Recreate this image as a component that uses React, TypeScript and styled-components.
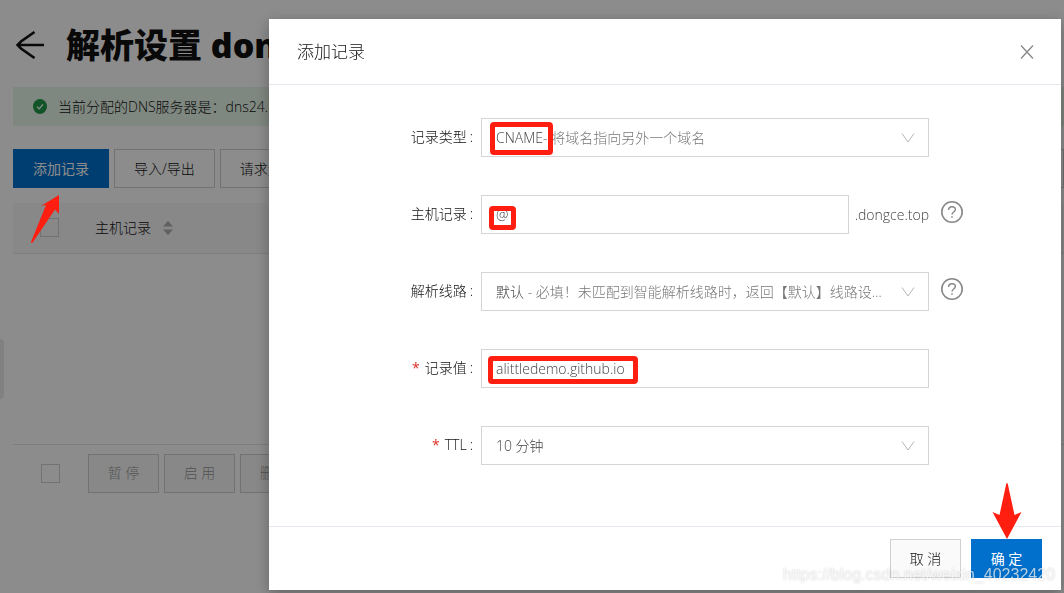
import React from 'react';
import styled, { createGlobalStyle, css } from 'styled-components';

const GlobalStyle = createGlobalStyle`
  *, *::before, *::after { box-sizing: border-box; }
  html, body { margin: 0; background: #fff; }
  body {
    font: 300 14px/20px "Open Sans", "Noto Sans CJK SC", sans-serif;
    color: #111;
    min-height: 100vh;
    overflow: hidden;
  }
  button, input, select { font: inherit; color: inherit; margin: 0; border-radius: 0; }
`;

const Page = styled.main`
  position: relative;
  min-height: 100vh;
  padding-left: 13px;
`;

const PageHeader = styled.header`
  display: flex;
  align-items: center;
  gap: 20px;
  height: 87px;
  padding: 2px 0 0 3px;
`;

const BackLink = styled.a`
  display: flex;
  color: #111;
`;

const PageTitle = styled.h1`
  margin: 0;
  font-size: 34px;
  line-height: 44px;
  font-weight: 800;
  color: #111;
  white-space: nowrap;
`;

const Notice = styled.div`
  display: flex;
  align-items: center;
  gap: 11px;
  height: 39px;
  padding-left: 20px;
  background: #e7f7e9;
  white-space: nowrap;
`;

const Toolbar = styled.div`
  display: flex;
  gap: 5px;
  padding: 23px 0 15px;
`;

const Anchor = styled.span`
  position: relative;
  display: inline-flex;
`;

const Button = styled.button<{ $kind?: 'primary' | 'muted' }>`
  min-width: 71px;
  height: 39px;
  padding: 0 18px;
  border: 1px solid #d0d0d0;
  background: #fafafa;
  white-space: nowrap;
  ${({ $kind }) =>
    $kind === 'primary' &&
    css`
      border-color: #0070cc;
      background: #0070cc;
      color: #fff;
      font-weight: 400;
    `}
  ${({ $kind }) =>
    $kind === 'muted' &&
    css`
      border-color: #d0d0d0;
      background: #f7f7f7;
      color: #999;
    `}
`;

const ToolButton = styled(Button)`
  min-width: 96px;
  padding: 0 19px;
  background-color: ${({ $kind }) => ($kind === 'primary' ? '#0070cc' : '#fff')};
`;

const Search = styled.input`
  flex: 1;
  min-width: 0;
  height: 39px;
  border: 1px solid #d0d0d0;
`;

const Table = styled.table`
  width: 100%;
  border-collapse: collapse;
  border-bottom: 1px solid #e6e6e6;

  th {
    height: 50px;
    padding: 0;
    text-align: left;
    font-weight: 300;
    background: #f8f8f8;
    border-bottom: 1px solid #e6e6e6;
  }
  th:first-child { width: 82px; padding-left: 27px; }
  td { height: 191px; }
`;

const Checkbox = styled.input`
  appearance: none;
  display: block;
  width: 19px;
  height: 19px;
  border: 1px solid #d0d0d0;
`;

const SortButton = styled.button`
  display: flex;
  align-items: center;
  gap: 12px;
  padding: 0;
  border: 0;
  background: none;
`;

const BatchBar = styled.div`
  display: flex;
  align-items: center;
  gap: 5px;
  padding: 9px 0 0 28px;

  input { margin-right: 23px; }
`;

const SideHandle = styled.div`
  position: absolute;
  left: 0;
  top: 339px;
  width: 4px;
  height: 60px;
  border-radius: 0 4px 4px 0;
  background: #ececec;
`;

const Overlay = styled.div`
  position: fixed;
  inset: 0;
  padding: 19px 3px 3px 269px;
  background: rgba(0, 0, 0, 0.45);
`;

const Dialog = styled.section`
  background: #fff;
  box-shadow: 0 4px 14px rgba(0, 0, 0, 0.3);
`;

const DialogHeader = styled.header`
  display: flex;
  align-items: center;
  justify-content: space-between;
  height: 66px;
  padding: 0 27px 0 28px;
  border-bottom: 1px solid #e3e9ee;
`;

const DialogTitle = styled.h2`
  margin: 0;
  font-size: 17px;
  line-height: 24px;
  font-weight: 300;
`;

const IconButton = styled.button`
  display: flex;
  padding: 0;
  border: 0;
  background: none;
  color: #888;
`;

const Form = styled.form`
  display: flex;
  flex-direction: column;
  gap: 38px;
  padding: 33px 0 61px;
`;

const Field = styled.div`
  display: grid;
  grid-template-columns: 204px minmax(0, 448px) auto;
  align-items: center;
  justify-content: start;
`;

const Label = styled.label<{ $required?: boolean }>`
  justify-self: end;
  padding-bottom: 2px;
  ${({ $required }) =>
    $required &&
    css`
      &::before {
        content: '*';
        margin-right: 5px;
        color: #d93026;
        font-weight: 400;
      }
    `}
  &::after {
    content: ':';
    margin-left: 3px;
  }
`;

const Control = styled.div`
  position: relative;
  display: flex;
  align-items: center;
  margin-left: 8px;
  margin-right: -8px;
  color: #444;
`;

const boxed = css`
  flex: 1;
  min-width: 0;
  height: 39px;
  padding: 0 14px;
  border: 1px solid #d5d5d5;
  background: #fff;
`;

const TextInput = styled.input`
  ${boxed}
`;

const Select = styled.select`
  ${boxed}
  appearance: none;
  color: transparent;

  option { color: #333; }
`;

const Selected = styled.span`
  position: absolute;
  left: 15px;
  right: 34px;
  overflow: hidden;
  text-overflow: ellipsis;
  white-space: nowrap;
  pointer-events: none;
  color: #777;

  b { font-weight: 300; color: #444; }
`;

const Chevron = styled.svg`
  position: absolute;
  right: 14px;
  pointer-events: none;
`;

const Suffix = styled.span`
  margin-left: 6px;
`;

const HelpButton = styled(IconButton)`
  margin-left: 20px;
  padding-bottom: 6px;
`;

const DialogFooter = styled.footer`
  display: flex;
  justify-content: flex-end;
  gap: 10px;
  padding: 12px 19px;
  border-top: 1px solid #e3e9ee;
`;

const Mark = styled.span<{ $x: number; $y: number; $w: number; $h: number }>`
  position: absolute;
  left: ${({ $x }) => $x}px;
  top: ${({ $y }) => $y}px;
  width: ${({ $w }) => $w}px;
  height: ${({ $h }) => $h}px;
  border: 5px solid #ff1e10;
  border-radius: 4px;
  pointer-events: none;
`;

const AddArrow = styled.svg`
  position: absolute;
  z-index: 2;
  left: 18px;
  top: 46px;
  pointer-events: none;
`;

const ConfirmArrow = styled.svg`
  position: absolute;
  left: 21px;
  bottom: 39px;
  pointer-events: none;
`;

const Watermark = styled.span`
  position: fixed;
  right: 9px;
  bottom: 8px;
  font: 16px/20px "Liberation Sans", sans-serif;
  color: rgba(255, 255, 255, 0.7);
  text-shadow: 0 0 2px rgba(0, 0, 0, 0.22);
  pointer-events: none;
`;

const SelectChevron = () => (
  <Chevron width="14" height="10" viewBox="0 0 14 10" fill="none" stroke="#b5b5b5" aria-hidden="true">
    <path d="M1 .5 7 9 13 .5" />
  </Chevron>
);

const Help = () => (
  <HelpButton type="button" aria-label="帮助">
    <svg width="22" height="22" viewBox="0 0 22 22" fill="none" stroke="currentColor" aria-hidden="true">
      <circle cx="11" cy="11" r="10.2" strokeWidth="1.6" />
      <path d="M7.6 8.9c0-1.9 1.4-3.2 3.4-3.2s3.4 1.2 3.4 2.9c0 2.3-3.4 2.5-3.4 4.9" strokeWidth="1.4" />
      <path d="M10.2 16h1.6" strokeWidth="1.6" />
    </svg>
  </HelpButton>
);

export default function App() {
  return (
    <>
      <GlobalStyle />
      <Page>
        <SideHandle />
        <PageHeader>
          <BackLink href="#" aria-label="返回">
            <svg width="30" height="28" viewBox="0 0 30 28" fill="none" stroke="currentColor" strokeWidth="2.6">
              <path d="M18.500 1 5 10.500 1.500 14 5 17.500 18.500 27M1.500 14H28" />
            </svg>
          </BackLink>
          <PageTitle>解析设置 dongce.top</PageTitle>
        </PageHeader>
        <Notice>
          <svg width="14" height="15" viewBox="0 0 14 15" aria-hidden="true">
            <ellipse cx="7" cy="7.500" rx="7" ry="7.500" fill="#209a48" />
            <path d="m4 7.600 2.200 2.200L10 5.400" fill="none" stroke="#fff" strokeWidth="1.300" />
          </svg>
          <span>当前分配的DNS服务器是：dns24.hichina.com</span>
        </Notice>
        <Toolbar>
          <Anchor>
            <ToolButton type="button" $kind="primary">添加记录</ToolButton>
            <AddArrow width="29" height="49" viewBox="0 0 29 49" aria-hidden="true">
              <path d="M28 0 10 11l5-1L0 47q0 2 2 0L24 14.500l4 4.500z" fill="#ff1e10" />
            </AddArrow>
          </Anchor>
          <ToolButton type="button">导入/导出</ToolButton>
          <ToolButton type="button">请求量统计</ToolButton>
          <Search type="search" aria-label="搜索记录" />
        </Toolbar>
        <Table>
          <thead>
            <tr>
              <th><Checkbox type="checkbox" aria-label="全选" /></th>
              <th>
                <SortButton type="button">
                  主机记录
                  <svg width="10" height="14" viewBox="0 0 10 14" fill="#b0b0b0" aria-hidden="true">
                    <path d="M0 5.500 5 0l5 5.500zM0 8.500h10L5 14z" />
                  </svg>
                </SortButton>
              </th>
            </tr>
          </thead>
          <tbody>
            <tr><td colSpan={2} /></tr>
          </tbody>
        </Table>
        <BatchBar>
          <Checkbox type="checkbox" aria-label="选择全部记录" />
          <Button type="button" $kind="muted" disabled>暂 停</Button>
          <Button type="button" $kind="muted" disabled>启 用</Button>
          <Button type="button" $kind="muted" disabled>删 除</Button>
        </BatchBar>
      </Page>

      <Overlay>
        <Dialog role="dialog" aria-modal="true" aria-labelledby="dialog-title">
          <DialogHeader>
            <DialogTitle id="dialog-title">添加记录</DialogTitle>
            <IconButton type="button" aria-label="关闭">
              <svg width="14" height="14" viewBox="0 0 14 14" fill="none" stroke="currentColor" strokeWidth="1.300">
                <path d="m1 .5 12 13M13 .5 1 13.500" />
              </svg>
            </IconButton>
          </DialogHeader>
          <Form>
            <Field>
              <Label htmlFor="type">记录类型</Label>
              <Control>
                <Select id="type"><option>CNAME- 将域名指向另外一个域名</option></Select>
                <Selected aria-hidden="true"><b>CNAME</b>- 将域名指向另外一个域名</Selected>
                <SelectChevron />
                <Mark $x={9} $y={4} $w={63} $h={33} />
              </Control>
            </Field>
            <Field>
              <Label htmlFor="host">主机记录</Label>
              <Control>
                <TextInput id="host" defaultValue="@" />
                <Suffix>.dongce.top</Suffix>
                <Mark $x={8} $y={11} $w={27} $h={24} />
              </Control>
              <Help />
            </Field>
            <Field>
              <Label htmlFor="line">解析线路</Label>
              <Control>
                <Select id="line"><option>默认 - 必填！未匹配到智能解析线路时，返回【默认】线路设置结果</option></Select>
                <Selected aria-hidden="true"><b>默认</b> - 必填！未匹配到智能解析线路时，返回【默认】线路设置结果</Selected>
                <SelectChevron />
              </Control>
              <Help />
            </Field>
            <Field>
              <Label htmlFor="value" $required>记录值</Label>
              <Control>
                <TextInput id="value" defaultValue="alittledemo.github.io" required />
                <Mark $x={7} $y={7} $w={150} $h={28} />
              </Control>
            </Field>
            <Field>
              <Label htmlFor="ttl" $required>TTL</Label>
              <Control>
                <Select id="ttl"><option>10 分钟</option></Select>
                <Selected aria-hidden="true"><b>10 分钟</b></Selected>
                <SelectChevron />
              </Control>
            </Field>
          </Form>
          <DialogFooter>
            <Button type="button">取 消</Button>
            <Anchor>
              <Button type="button" $kind="primary">确 定</Button>
              <ConfirmArrow width="30" height="56" viewBox="0 0 30 56" aria-hidden="true">
                <path d="M15 56 .5 29l7 3L14.200 1q.8-2 1.600 0L22.500 32l7-3z" fill="#ff1e10" />
              </ConfirmArrow>
            </Anchor>
          </DialogFooter>
        </Dialog>
        <Watermark>https://blog.csdn.net/weixin_40232420</Watermark>
      </Overlay>
    </>
  );
}
